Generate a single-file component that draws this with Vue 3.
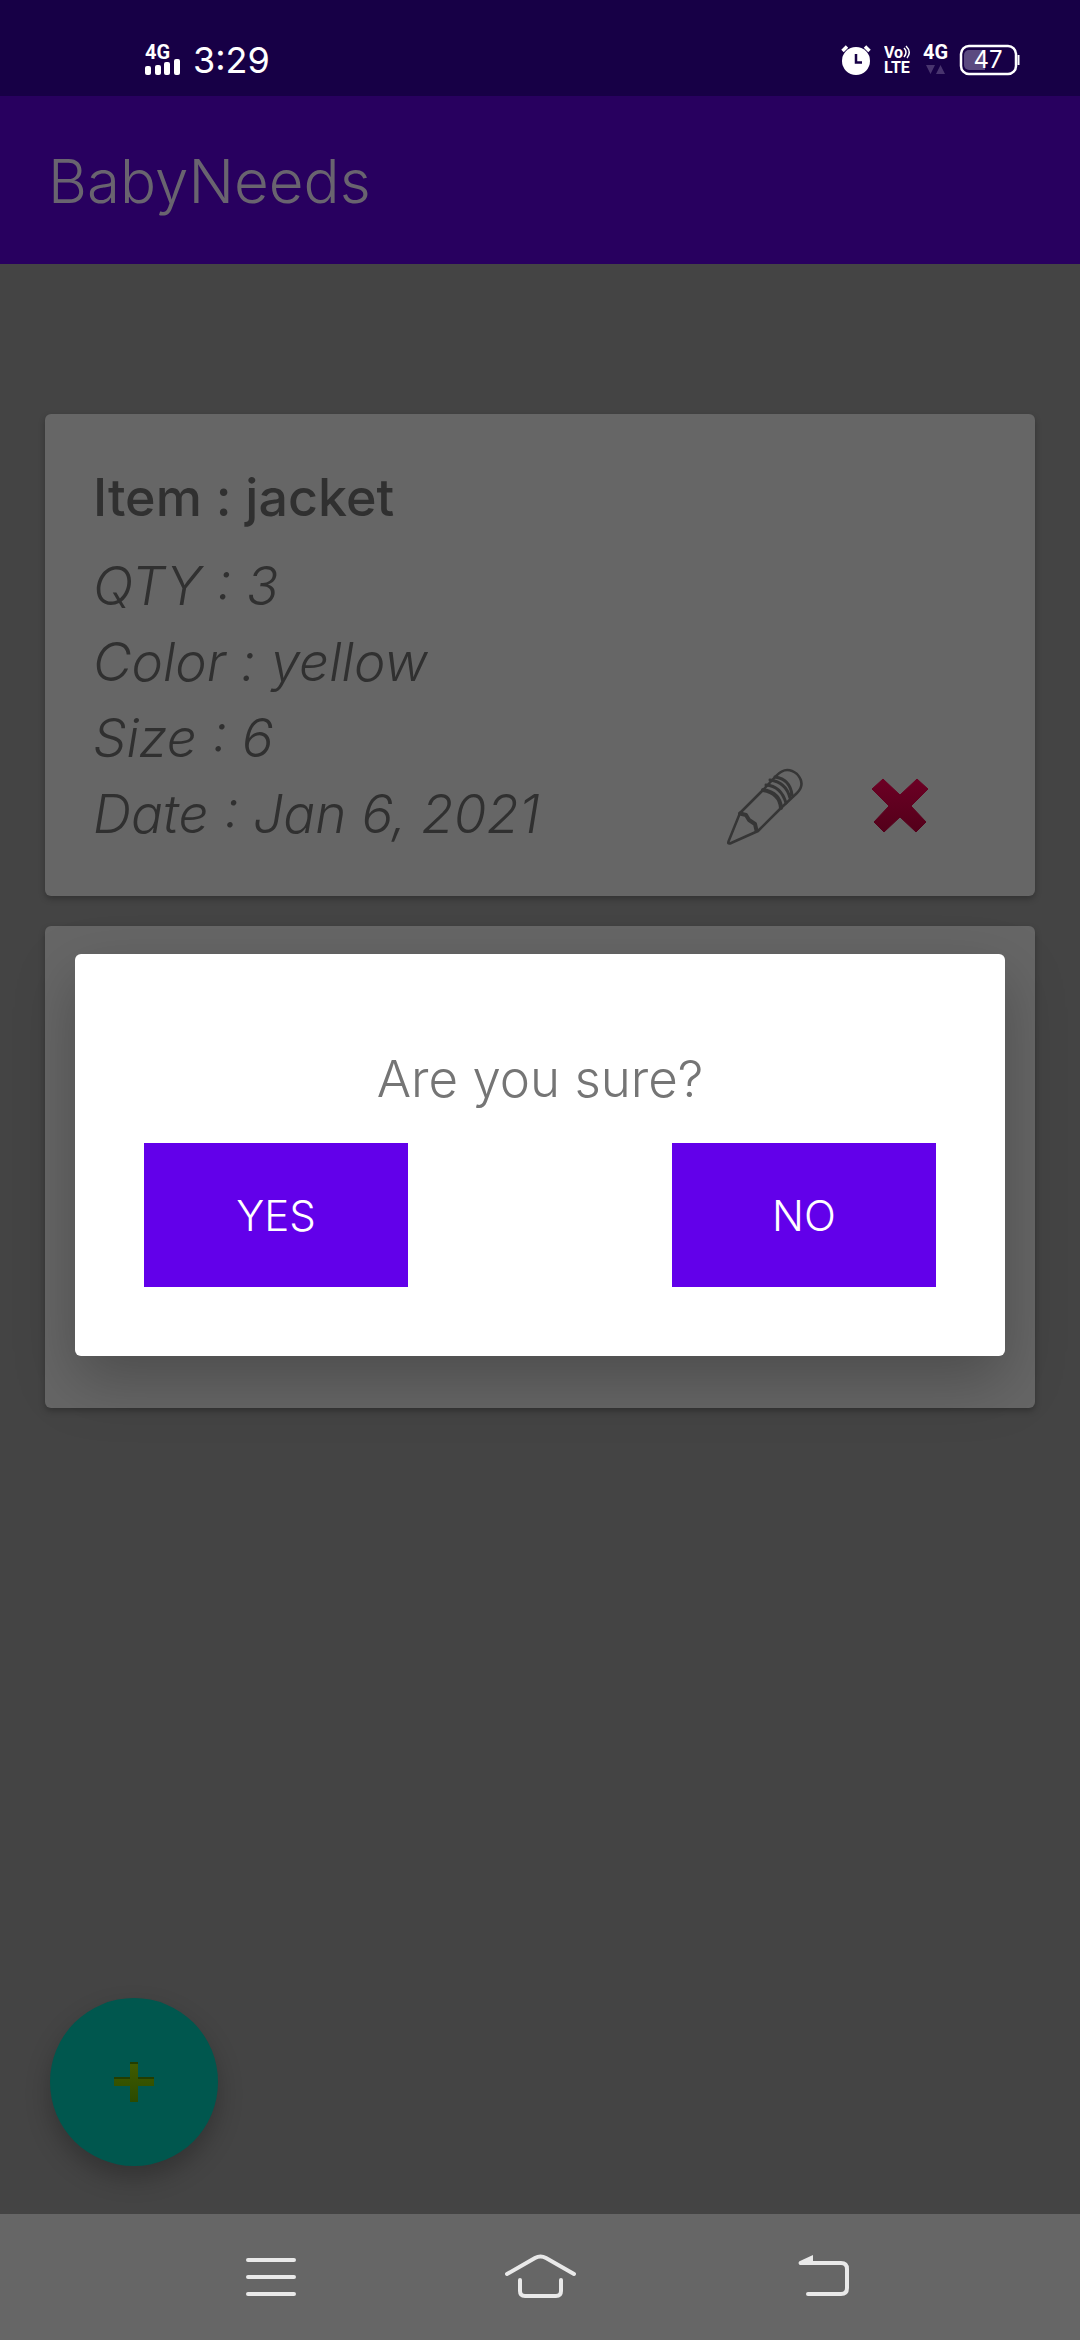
<script setup>
import { ref } from 'vue'

const items = ref([
  { id: 1, name: 'jacket', details: ['QTY : 3', 'Color : yellow', 'Size : 6', 'Date : Jan 6, 2021'] },
  { id: 2, name: '', details: [] }
])
</script>

<template>
  <div class="screen">
    <div class="status-bar">
      <div class="status-group status-left">
        <svg width="36" height="44" viewBox="0 -6 36 44" fill="#fff">
          <text x="0" y="15" class="net">4G</text>
          <rect x="0" y="22" width="6" height="9" rx="2" />
          <rect x="10" y="21" width="6" height="10" rx="2" />
          <rect x="19" y="18" width="6" height="13" rx="2" />
          <rect x="29" y="15" width="6" height="16" rx="2" />
        </svg>
        <span class="clock">3:29</span>
      </div>
      <div class="status-group status-right">
        <svg width="32" height="44" viewBox="0 -6 32 44">
          <circle cx="15" cy="17" r="14" fill="#fff" />
          <path d="M1.500 7L6 2.500M28.500 7L24 2.500" stroke="#fff" stroke-width="3.500" />
          <path d="M15 10V18.500H21" fill="none" stroke="#170046" stroke-width="2.500" />
        </svg>
        <svg width="28" height="44" viewBox="0 -6 28 44" fill="#fff">
          <text x="0" y="14" class="volte">Vo</text>
          <path d="M20 4q4 4 0 9M22 2q6 6 1 12" fill="none" stroke="#fff" stroke-width="1.500" />
          <text x="0" y="29" class="volte">LTE</text>
        </svg>
        <svg width="25" height="44" viewBox="0 -6 25 44" fill="#fff">
          <text x="0" y="15" class="net">4G</text>
          <path d="M3 21h9l-4.500 9zM13 30h9l-4.500-9z" fill="#48346e" />
        </svg>
        <svg width="61" height="44" viewBox="0 -6 61 44">
          <rect x="2" y="2" width="55" height="28" rx="8" fill="none" stroke="#fff" stroke-width="2.500" />
          <path d="M26 6H10a5 5 0 0 0-5 5v10a5 5 0 0 0 5 5h16z" fill="#5b4a80" />
          <path d="M59.500 11v10" stroke="#fff" stroke-width="2" />
          <text x="29" y="24" text-anchor="middle" class="charge">47</text>
        </svg>
      </div>
    </div>

    <div class="app">
      <header class="app-bar">
        <h1>BabyNeeds</h1>
      </header>

      <main class="list">
        <article v-for="item in items" :key="item.id" class="card">
          <template v-if="item.name">
            <div class="info">
              <h2>Item : {{ item.name }}</h2>
              <p v-for="line in item.details" :key="line">{{ line }}</p>
            </div>
            <div class="actions">
              <button type="button" aria-label="Edit">
                <svg width="80" height="80" viewBox="0 0 80 80" fill="none" stroke="#363636" stroke-width="2.500" stroke-linejoin="round" stroke-linecap="round">
                  <path d="M3.500 75.500L15 47L38 24L51 10Q61-1 72 8Q81 18 72 27L56 42L33 65L5 77.500Q2.500 78 3.500 75.500Z" />
                  <path d="M15 47.500l6 1.500 3 5 6 4 1.500 6.500" stroke-width="4" />
                  <path d="M38 24Q55 27 56 42" stroke-width="4" />
                  <path d="M41 19Q56 20 61 37M45 14Q61 16 65 32M50 11Q65 13 67 29" stroke-width="3" />
                </svg>
              </button>
              <button type="button" aria-label="Delete">
                <svg width="60" height="60" viewBox="0 0 60 60">
                  <defs>
                    <linearGradient id="cross" x1="0" y1="0" x2="0" y2="1">
                      <stop offset="0" stop-color="#6c0024" />
                      <stop offset="1" stop-color="#53001a" />
                    </linearGradient>
                  </defs>
                  <path d="M13 3L30 19L47 3L58 13L41 30L56 46L46 56L30 41L14 56L4 46L19 30L2 13Z" fill="url(#cross)" stroke="url(#cross)" stroke-width="1" stroke-linejoin="round" />
                </svg>
              </button>
            </div>
          </template>
        </article>
      </main>

      <button type="button" class="fab" aria-label="Add item">
        <svg width="40" height="40" viewBox="0 0 40 40">
          <defs>
            <linearGradient id="plus" x1="0" y1="0" x2="0" y2="1">
              <stop offset="0" stop-color="#425c00" />
              <stop offset="1" stop-color="#2a4a00" />
            </linearGradient>
          </defs>
          <path d="M16 0h8v15h16v9H24v16h-8V24H0v-9h16z" fill="url(#plus)" />
          <path d="M16 1h8M0 16h16M24 16h16" stroke="#223d00" stroke-width="2" />
        </svg>
      </button>

      <div class="overlay">
        <div class="dialog" role="dialog" aria-labelledby="question">
          <p id="question">Are you sure?</p>
          <div class="choices">
            <button type="button">YES</button>
            <button type="button">NO</button>
          </div>
        </div>
      </div>
    </div>

    <nav class="nav-bar">
      <button type="button" aria-label="Recent apps">
        <svg width="96" height="48" viewBox="0 0 96 48" fill="none" stroke="#e9e9e9" stroke-width="4" stroke-linecap="round">
          <path d="M26 7h46M26 24h46M26 41h46" />
        </svg>
      </button>
      <button type="button" aria-label="Home">
        <svg width="96" height="48" viewBox="0 0 96 48" fill="none" stroke="#e9e9e9" stroke-width="4" stroke-linecap="round">
          <path d="M15 21L43 5q5.500-3 11 0l28 16M28 27v11q0 5 5 5h31q5 0 5-5V27" />
        </svg>
      </button>
      <button type="button" aria-label="Back">
        <svg width="96" height="48" viewBox="0 0 96 48" fill="none" stroke="#e9e9e9" stroke-width="4" stroke-linecap="round">
          <path d="M39 10h40q6 0 6 6v19q0 6-6 6H46" />
          <path d="M51 2v10H38q-3-2 0-4z" fill="#e9e9e9" stroke="none" />
        </svg>
      </button>
    </nav>
  </div>
</template>

<style>
body {
  margin: 0;
  background: #444;
}
</style>

<style scoped>
.screen {
  min-height: 100vh;
  display: flex;
  flex-direction: column;
  font-family: Inter, Roboto, sans-serif;
  font-weight: 300;
}

h1,
h2,
p {
  margin: 0;
}

button {
  padding: 0;
  border: 0;
  background: none;
  font: inherit;
}

svg {
  display: block;
}

.status-bar {
  height: 96px;
  padding: 24px 60px 0 145px;
  box-sizing: border-box;
  display: flex;
  justify-content: space-between;
  align-items: center;
  background: #170046;
  color: #fff;
}

.status-group {
  display: flex;
  align-items: center;
}

.status-left {
  gap: 12px;
}

.status-right {
  gap: 11px;
}

.clock {
  font-size: 36px;
  font-weight: 400;
  line-height: 48px;
}

.net {
  font: 700 20px Roboto, sans-serif;
}

.volte {
  font: 700 16px Roboto, sans-serif;
}

.charge {
  font: 400 24px Inter, sans-serif;
  fill: #fff;
}

.app {
  position: relative;
  flex: 1;
  display: flex;
  flex-direction: column;
  background: #444;
}

.app-bar {
  height: 168px;
  padding: 2px 48px 0;
  box-sizing: border-box;
  display: flex;
  align-items: center;
  background: #28005f;
}

h1 {
  font-size: 60px;
  font-weight: 300;
  line-height: 72px;
  color: #69646f;
}

.list {
  padding: 150px 45px 0;
  display: grid;
  grid-auto-rows: 1fr;
  gap: 30px;
}

.card {
  padding: 46px 90px 44px 48px;
  display: flex;
  justify-content: space-between;
  align-items: flex-end;
  border-radius: 6px;
  background: #666;
  box-shadow: 0 3px 6px rgba(0, 0, 0, 0.25);
  color: #303030;
}

.info {
  font-size: 53px;
  line-height: 76px;
}

.info h2 {
  margin-bottom: 12px;
  font-size: 52px;
  font-weight: 500;
}

.info p {
  width: fit-content;
  overflow: hidden;
  font-style: italic;
}

.actions {
  display: flex;
  gap: 45px;
}

.actions button {
  width: 90px;
  height: 92px;
  display: grid;
  place-items: center;
}

.fab {
  position: absolute;
  left: 50px;
  bottom: 48px;
  width: 168px;
  height: 168px;
  display: grid;
  place-items: center;
  border-radius: 50%;
  background: #00574e;
  box-shadow: 0 12px 24px rgba(0, 0, 0, 0.25);
}

.overlay {
  position: absolute;
  inset: 0;
  padding: 0 75px;
  display: flex;
  align-items: center;
}

.dialog {
  flex: 1;
  padding: 94px 69px 69px;
  display: flex;
  flex-direction: column;
  gap: 33px;
  border-radius: 6px;
  background: #fff;
  box-shadow: 0 24px 60px rgba(0, 0, 0, 0.25);
}

.dialog p {
  font-size: 51px;
  line-height: 62px;
  text-align: center;
  color: #757575;
}

.choices {
  display: flex;
  justify-content: space-between;
}

.choices button {
  width: 264px;
  height: 144px;
  background: #6200ea;
  color: #fff;
  font-size: 42px;
}

.nav-bar {
  height: 126px;
  padding: 0 135px;
  display: flex;
  background: #666;
}

.nav-bar button {
  flex: 1;
  display: grid;
  place-items: center;
}
</style>
